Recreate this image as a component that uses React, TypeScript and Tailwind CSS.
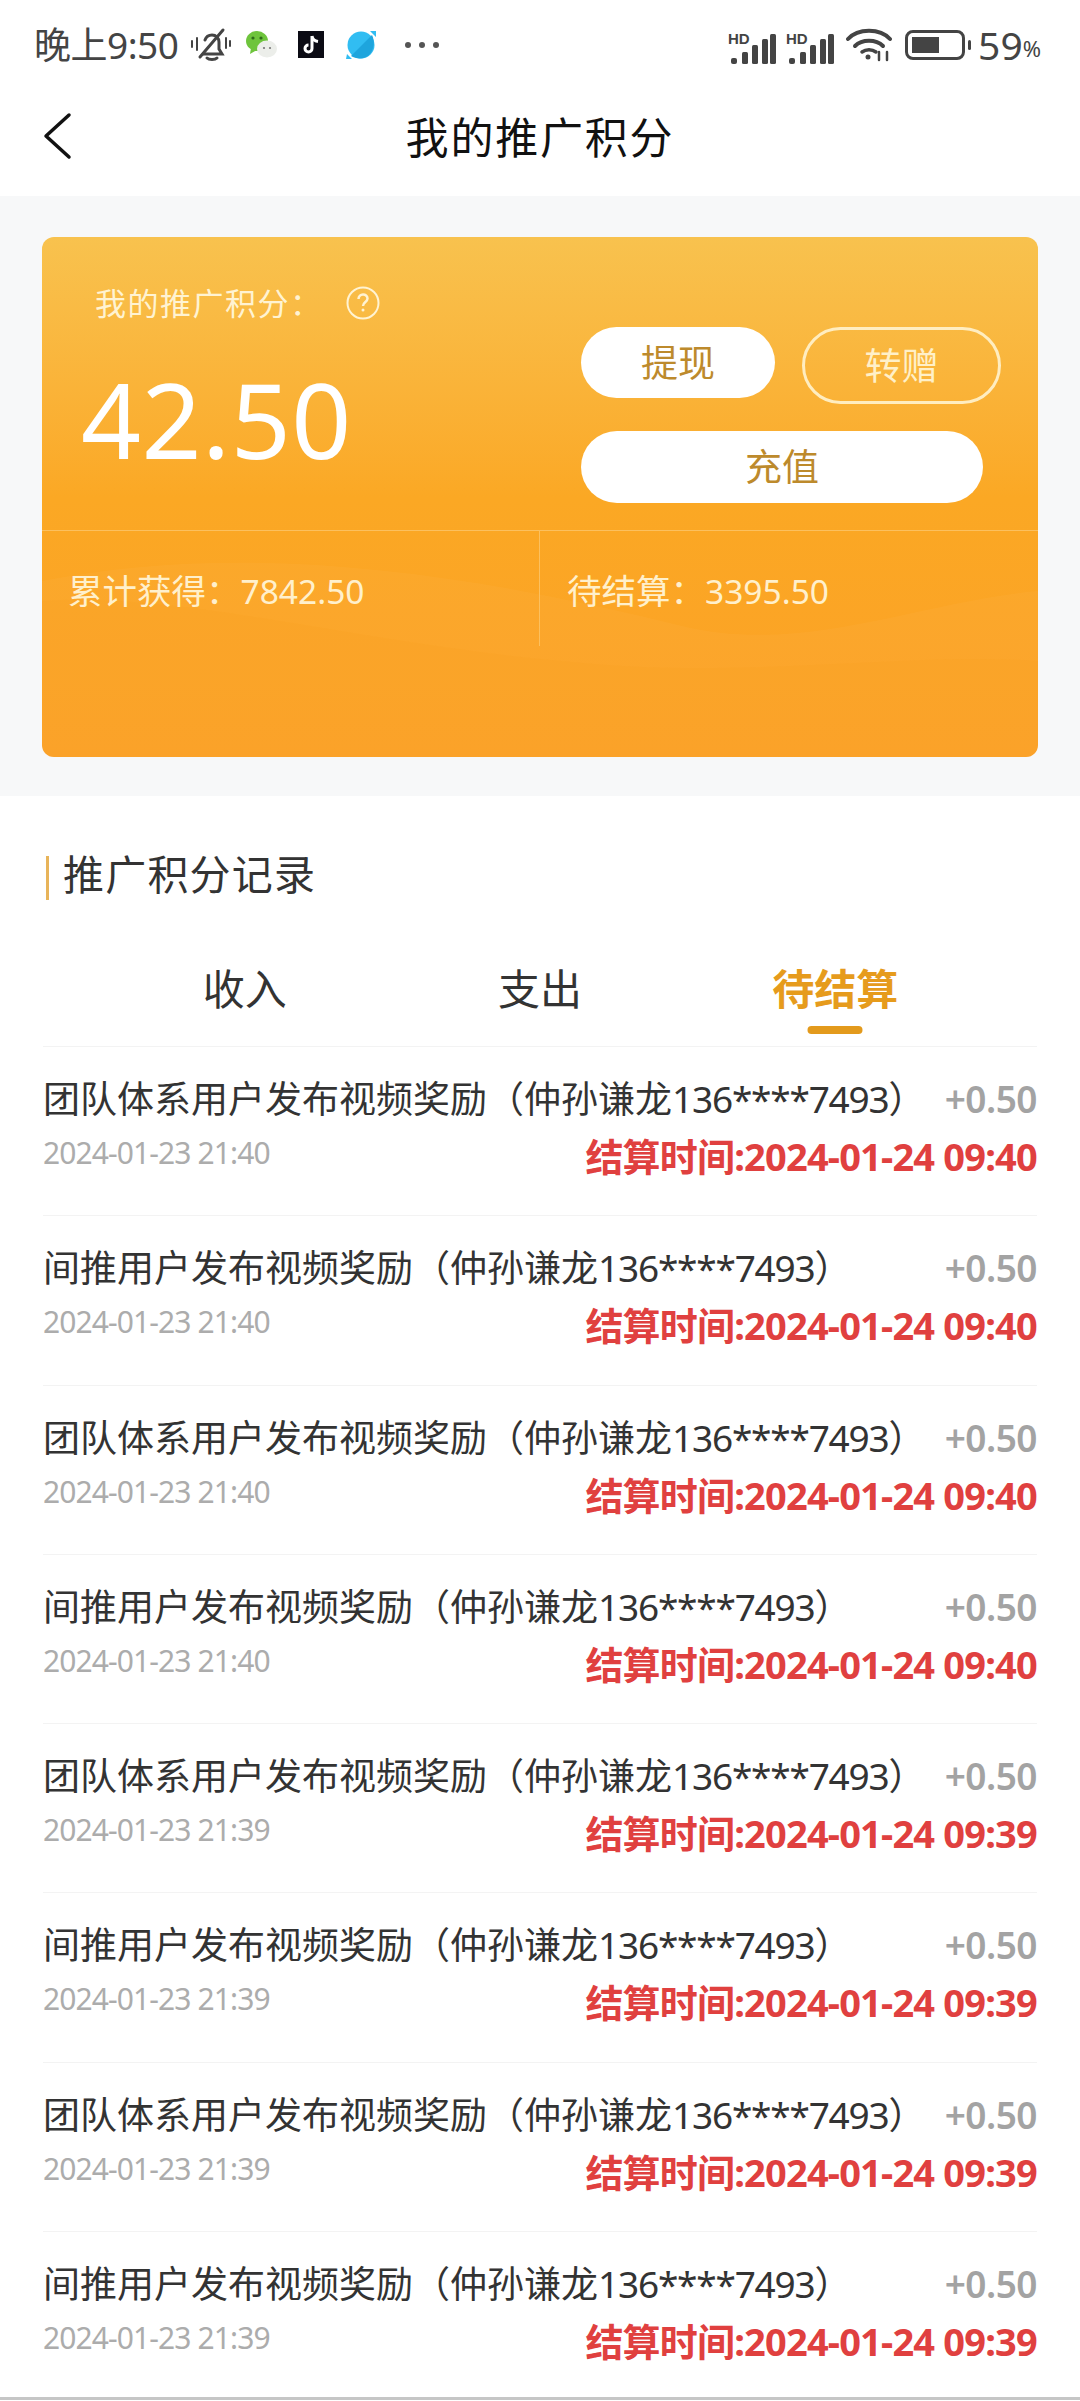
import React from "react";

interface RecordRow {
  title: string;
  date: string;
  settle: string;
}

const team = "团队体系用户发布视频奖励（仲孙谦龙";
const indirect = "间推用户发布视频奖励（仲孙谦龙";

const records: RecordRow[] = [
  { title: team, date: "2024-01-23 21:40", settle: "2024-01-24 09:40" },
  { title: indirect, date: "2024-01-23 21:40", settle: "2024-01-24 09:40" },
  { title: team, date: "2024-01-23 21:40", settle: "2024-01-24 09:40" },
  { title: indirect, date: "2024-01-23 21:40", settle: "2024-01-24 09:40" },
  { title: team, date: "2024-01-23 21:39", settle: "2024-01-24 09:39" },
  { title: indirect, date: "2024-01-23 21:39", settle: "2024-01-24 09:39" },
  { title: team, date: "2024-01-23 21:39", settle: "2024-01-24 09:39" },
  { title: indirect, date: "2024-01-23 21:39", settle: "2024-01-24 09:39" },
];

function Signal() {
  return (
    <svg width="48" height="38" viewBox="0 -6 48 38" fill="#444">
      <text x="0" y="12" fontSize="15" fontWeight="700" fontFamily="Liberation Sans, sans-serif">HD</text>
      <rect x="3" y="26" width="6" height="6" rx="2" />
      <rect x="14" y="20" width="6" height="12" rx="1.5" />
      <rect x="24" y="13" width="6" height="19" rx="1.5" />
      <rect x="34" y="7" width="6" height="25" rx="1.5" />
      <rect x="42" y="2" width="6" height="30" rx="1.5" />
    </svg>
  );
}

function StatusBar() {
  return (
    <div className="flex h-[84px] items-center pl-[34px] pr-[39px] pt-[5px] text-[#444]">
      <span className="w-[156px] text-[37px] leading-none tracking-[-0.5px]">晚上9:50</span>
      <svg width="42" height="36" viewBox="0 0 42 36" fill="none" stroke="#444" strokeWidth="3" strokeLinecap="round">
        <path d="M13 27h19l-3-5v-7c0-4-3-7-7-7s-6 2-7 5" />
        <path d="M17 31c2 2 8 2 10 0" />
        <path d="M10 30 33 3" />
        <path d="M2 14v6M7 11v12M36 11v10M40 14v5" strokeWidth="2" />
      </svg>
      <svg className="ml-[14px]" width="32" height="30" viewBox="0 0 32 30">
        <ellipse cx="11" cy="11" rx="11" ry="10" fill="#6ec43c" />
        <path d="M5 18 4 24l7-4z" fill="#6ec43c" />
        <ellipse cx="21" cy="19" rx="10" ry="8.5" fill="#eceeea" />
        <circle cx="7" cy="8" r="1.6" fill="#2e6b1a" />
        <circle cx="15" cy="8" r="1.6" fill="#2e6b1a" />
        <circle cx="18" cy="18" r="1.1" fill="#777" />
        <circle cx="24" cy="18" r="1.1" fill="#777" />
      </svg>
      <svg className="ml-[20px]" width="26" height="27" viewBox="0 0 26 27">
        <rect width="26" height="27" fill="#0b0b14" />
        <path d="M14 5v12.5a3.5 3.5 0 1 1-3.5-3.5M14 5c.5 3 2.500 5 6 5.500" fill="none" stroke="#fff" strokeWidth="3" />
      </svg>
      <svg className="ml-[22px]" width="30" height="30" viewBox="0 0 30 30">
        <circle cx="15" cy="15" r="13.500" fill="#31bdf2" />
        <path d="M26 5 5 26c6 4 15 3 19-2s5-13 2-19z" fill="#1ea5dd" />
        <path d="M24 1h6v6zM1 24l5 5H0z" fill="#31bdf2" />
      </svg>
      <div className="ml-[29px] flex gap-[8px]">
        <span className="size-[6px] rounded-full bg-[#555]" />
        <span className="size-[6px] rounded-full bg-[#555]" />
        <span className="size-[6px] rounded-full bg-[#555]" />
      </div>
      <div className="ml-auto flex items-center">
        <Signal />
        <div className="ml-[10px]"><Signal /></div>
        <svg className="ml-[12px]" width="46" height="34" viewBox="0 0 46 34" fill="none" stroke="#444" strokeWidth="4" strokeLinecap="round">
          <path d="M2 11C12 0 34 0 44 11" />
          <path d="M9 18c7-7 21-7 28 0" />
          <path d="M16 24c4-3 10-3 14 0" strokeWidth="3.500" />
          <circle cx="22" cy="29" r="2.500" fill="#444" stroke="none" />
          <path d="M33 24v8M41 24v8" strokeWidth="2.500" />
        </svg>
        <div className="ml-[13px] flex items-center">
          <div className="h-[30px] w-[60px] rounded-[8px] border-[3px] border-[#444] p-[4px]">
            <div className="h-full w-[58%] bg-[#444]" />
          </div>
          <div className="ml-[3px] h-[10px] w-[3px] rounded-full bg-[#444]" />
        </div>
        <span className="ml-[7px] text-[39px] leading-none">59</span>
        <span className="mt-[7px] text-[22px] leading-none">%</span>
      </div>
    </div>
  );
}

function PointsCard() {
  return (
    <div className="relative h-[520px] overflow-hidden rounded-[12px] bg-gradient-to-b from-[#f8c24e] via-[#fba824] via-50% to-[#fca126] text-white">
      <svg className="absolute inset-x-0 top-[294px]" width="996" height="226" viewBox="0 0 996 226" fill="none">
        <path d="M0 50C200 10 420 40 640 95C760 125 880 70 996 60V226H0z" fill="#fff" opacity="0.03" />
        <path d="M0 70C140 60 300 110 520 130C700 150 860 120 996 130V226H0z" fill="#f59a17" opacity="0.12" />
      </svg>
      <div className="relative flex h-[294px] border-b border-[#fcc05e]">
        <div className="w-[539px] pl-[39px] pt-[46px]">
          <div className="ml-[14px] flex items-center">
            <span className="text-[31px] leading-[40px] tracking-[1.500px] text-[#fff3d2]">我的推广积分：</span>
            <svg className="ml-[22px]" width="36" height="36" viewBox="0 0 36 36" fill="none" stroke="#fff3d2">
              <circle cx="18" cy="18" r="15.500" strokeWidth="2" />
              <path d="M13.500 14c0-6 9-6 9-.5 0 3.500-4.500 3.500-4.500 7.500" strokeWidth="2.500" />
              <circle cx="18" cy="25" r="1.500" fill="#fff3d2" stroke="none" />
            </svg>
          </div>
          <div className="mt-[36px] text-[105px] leading-[120px] tracking-[0.500px]">42.50</div>
        </div>
        <div className="flex-1 pl-0 pt-[90px]">
          <div className="flex items-start gap-[27px]">
            <button className="flex h-[71px] w-[194px] items-center justify-center rounded-full bg-white text-[37px] text-[#bd8a2c]">提现</button>
            <button className="flex h-[77px] w-[199px] items-center justify-center rounded-full border-[3px] border-[#ffedc0] text-[37px] text-[#fff0c8]">转赠</button>
          </div>
          <button className="mt-[27px] flex h-[72px] w-[402px] items-center justify-center rounded-full bg-white text-[37px] text-[#bd8a2c]">充值</button>
        </div>
      </div>
      <div className="relative flex leading-[44px] text-[#fff0cc]">
        <div className="h-[115px] w-[498px] border-r border-[#fcc05e] pl-[26px] pt-[38px]">
          <span className="text-[34.5px]">累计获得：</span>
          <span className="text-[33.5px]">7842.50</span>
        </div>
        <div className="pl-[27px] pt-[38px]">
          <span className="text-[34.5px]">待结算：</span>
          <span className="text-[33.5px]">3395.50</span>
        </div>
      </div>
    </div>
  );
}

export default function App() {
  return (
    <div className="h-[2401px] overflow-hidden bg-white font-['Noto_Sans','Noto_Sans_CJK_SC',sans-serif]">
      <StatusBar />
      <div className="relative flex h-[112px] items-center justify-center pb-[6px]">
        <svg className="absolute left-[42px] top-[28px]" width="30" height="48" viewBox="0 0 30 48" fill="none" stroke="#111" strokeWidth="3.500" strokeLinecap="round" strokeLinejoin="round">
          <path d="M27 3 4 24l23 21" />
        </svg>
        <h1 className="text-[43px] leading-none tracking-[1.800px] text-[#111]">我的推广积分</h1>
      </div>

      <div className="h-[600px] bg-[#f7f8f9] px-[42px] pt-[41px]">
        <PointsCard />
      </div>

      <div className="px-[43px] pt-[60px]">
        <div className="ml-[3px] flex h-[44px] items-center border-l-[3px] border-[#e8b45a] pb-[8px] pl-[14px] text-[41px] leading-none tracking-[1.200px] text-[#333]">推广积分记录</div>
        <div className="mx-[54px] mt-[59px] grid h-[87px] grid-cols-3 text-center text-[42px] leading-[60px] text-[#333]">
          <div>收入</div>
          <div>支出</div>
          <div className="relative font-bold text-[#e69b1c]">
            待结算
            <span className="absolute left-1/2 top-[67px] h-[8px] w-[55px] -translate-x-1/2 rounded-full bg-[#e39a1c]" />
          </div>
        </div>
        {records.map((r, i) => (
          <div key={i} className="h-[169.3px] border-t border-[#f3f3f3] pt-[30px]">
            <div className="flex items-center justify-between leading-[44px]">
              <span className="text-[37px] text-[#333]">
                {r.title}
                <span className="tracking-[-1.200px]">136****7493）</span>
              </span>
              <span className="text-[37px] font-semibold tracking-[-0.500px] text-[#a3a3a3]">+0.50</span>
            </div>
            <div className="mt-[12px] flex items-start justify-between">
              <span className="text-[30px] leading-[40px] tracking-[-0.900px] text-[#acacac]">{r.date}</span>
              <span className="text-[38px] font-bold leading-[46px] tracking-[-0.800px] text-[#e0403f]">结算时间:{r.settle}</span>
            </div>
          </div>
        ))}
      </div>
      <div className="relative -mt-[3px] h-[3px] bg-[#c6c6c6]" />
    </div>
  );
}
